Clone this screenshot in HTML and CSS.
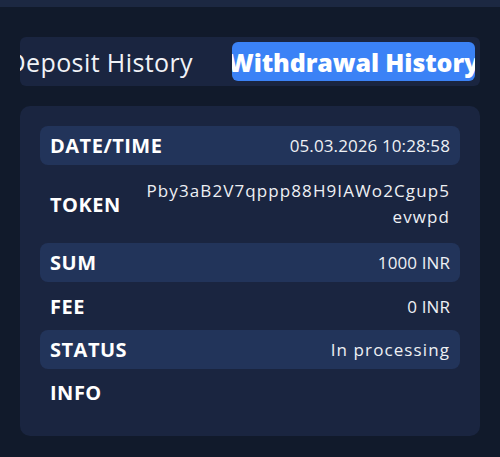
FILE: index.html
```html
<!DOCTYPE html>
<html lang="en">
<head>
<meta charset="utf-8">
<title>History</title>
<link rel="stylesheet" href="styles.css">
</head>
<body>
<div class="topbar"></div>
<main class="main">
  <nav class="tabs">
    <div class="tab tab-deposit">Deposit History</div>
    <div class="tab tab-withdraw">Withdrawal History</div>
  </nav>
  <section class="card">
    <div class="row hl"><span class="label">DATE/TIME</span><span class="value">05.03.2026 10:28:58</span></div>
    <div class="row token"><span class="label">TOKEN</span><span class="value value-wide token-value">Pby3aB2V7qppp88H9IAWo2Cgup5<br>evwpd</span></div>
    <div class="row hl"><span class="label">SUM</span><span class="value">1000 INR</span></div>
    <div class="row"><span class="label">FEE</span><span class="value">0 INR</span></div>
    <div class="row hl"><span class="label">STATUS</span><span class="value value-wide">In processing</span></div>
    <div class="row last"><span class="label">INFO</span><span class="value"></span></div>
  </section>
</main>
</body>
</html>
```
FILE: styles.css
```css
* { box-sizing: border-box; }
html, body { margin: 0; height: 100%; }
body {
  background: #111a2b;
  font-family: "Open Sans", "Noto Sans", sans-serif;
  color: #ffffff;
}
.topbar {
  height: 7px;
  background: #1c2842;
}
.main {
  padding: 30px 20px 0;
}
.tabs {
  display: flex;
  height: 49px;
  padding: 5px;
  background: #1a2540;
  border-radius: 6px;
  overflow: hidden;
}
.tab {
  display: flex;
  align-items: center;
  white-space: nowrap;
  font-size: 25px;
  min-width: 0;
}
.tab-deposit {
  flex: 0 0 207px;
  justify-content: flex-end;
  padding-right: 39px;
  color: #f1f3f7;
  letter-spacing: 0.4px;
}
.tab-withdraw {
  flex: 1 1 auto;
  justify-content: center;
  background: #3b82f6;
  border-radius: 6px;
  overflow: hidden;
  font-weight: 800;
  letter-spacing: -0.1px;
}
.card {
  margin-top: 20px;
  padding: 20px;
  background: #1a2540;
  border-radius: 10px;
}
.row {
  display: flex;
  justify-content: space-between;
  align-items: center;
  min-height: 48px;
  padding: 0 10px;
  border-radius: 8px;
}
.row.hl {
  min-height: 39px;
  background: #22345a;
}
.row.token {
  padding: 13px 10px;
  min-height: 78px;
}
.row.last {
  min-height: 47px;
}
.label {
  font-weight: 700;
  font-size: 20px;
  letter-spacing: 0.5px;
}
.value {
  font-size: 17px;
  color: #eef0f4;
  text-align: right;
  letter-spacing: 0.1px;
}
.value-wide {
  letter-spacing: 1.1px;
}
.token-value {
  line-height: 26px;
}
```
